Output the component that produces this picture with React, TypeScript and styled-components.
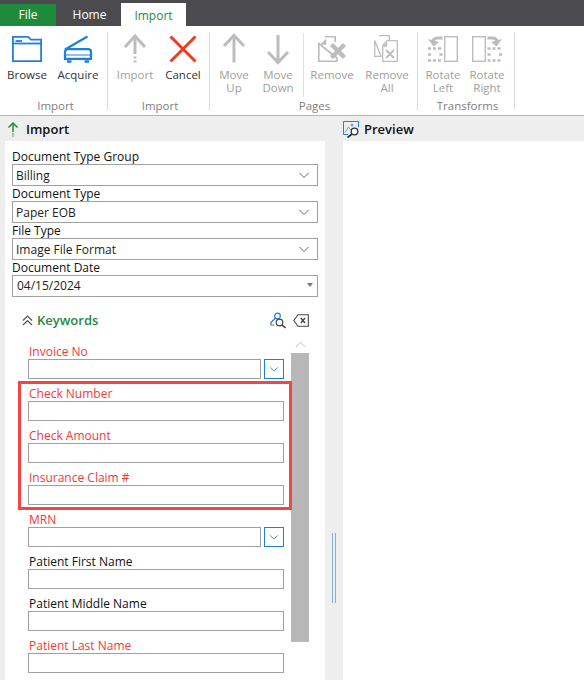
import React from "react";
import styled, { createGlobalStyle } from "styled-components";

const GlobalStyle = createGlobalStyle`
  html, body {
    margin: 0;
    padding: 0;
    background: #eeeeee;
  }
  body {
    font-family: "Open Sans", "Noto Sans", "Liberation Sans", sans-serif;
    font-size: 12px;
    color: #222;
    overflow: hidden;
  }
  * { box-sizing: border-box; }
`;

const Page = styled.div`
  width: 584px;
  height: 680px;
  display: flex;
  flex-direction: column;
  overflow: hidden;
`;

const TabBar = styled.div`
  height: 26px;
  flex: none;
  background: #4b4b4f;
  display: flex;
  align-items: flex-end;
`;

const FileTab = styled.div`
  width: 56px;
  height: 22px;
  padding-bottom: 1px;
  background: #1e8b3c;
  color: #fff;
  display: flex;
  align-items: center;
  justify-content: center;
`;

const HomeTab = styled.div`
  width: 65px;
  height: 22px;
  padding: 0 0 1px 2px;
  color: #fff;
  display: flex;
  align-items: center;
  justify-content: center;
`;

const ActiveTab = styled.div`
  width: 65px;
  height: 23px;
  padding-top: 1px;
  background: #fff;
  color: #1e8b3c;
  display: flex;
  align-items: center;
  justify-content: center;
`;

const Ribbon = styled.div`
  height: 90px;
  flex: none;
  background: #fff;
  border-bottom: 1px solid #b4b4b4;
  display: flex;
  padding-top: 6px;
`;

const RibbonGroup = styled.div<{ $width: number; $pad: number }>`
  width: ${(p) => p.$width}px;
  height: 78px;
  padding: 1px 0 0 ${(p) => p.$pad}px;
  border-right: 1px solid #dcdcdc;
  display: flex;
  flex-direction: column;
  flex: none;
`;

const GroupButtons = styled.div`
  height: 65px;
  flex: none;
  display: flex;
`;

const GroupLabel = styled.div`
  height: 16px;
  flex: none;
  line-height: 16px;
  text-align: center;
  color: #808080;
  font-size: 11.5px;
`;

const RibbonButton = styled.div<{ $width: number; $disabled?: boolean }>`
  width: ${(p) => p.$width}px;
  flex: none;
  display: flex;
  flex-direction: column;
  align-items: center;
  text-align: center;
  line-height: 13px;
  font-size: 11.5px;
  color: ${(p) => (p.$disabled ? "#a0a0a0" : "#333")};
  svg {
    display: block;
    margin-bottom: 3px;
    flex: none;
  }
`;

const InnerDivider = styled.div`
  width: 1px;
  height: 64px;
  background: #e2e2e2;
  margin: 0 0 0 3px;
  flex: none;
`;

const PaneHeaders = styled.div`
  height: 25px;
  flex: none;
  padding-top: 1px;
  display: flex;
  align-items: center;
`;

const PaneTitle = styled.div<{ $width: number; $pad: number; $gap: number }>`
  width: ${(p) => p.$width}px;
  padding-left: ${(p) => p.$pad}px;
  display: flex;
  align-items: center;
  gap: ${(p) => p.$gap}px;
  font-size: 13px;
  font-weight: 600;
  color: #111;
`;

const Workspace = styled.div`
  flex: 1;
  min-height: 0;
  display: flex;
  padding-left: 5px;
`;

const LeftPanel = styled.div`
  width: 320px;
  background: #fff;
  padding-top: 8px;
  flex: none;
`;

const Splitter = styled.div`
  width: 18px;
  flex: none;
  display: flex;
  align-items: flex-start;
  justify-content: center;
  padding-top: 392px;
`;

const SplitterGrip = styled.div`
  width: 4px;
  height: 70px;
  border-left: 1px solid #7fb2e5;
  border-right: 1px solid #7fb2e5;
`;

const RightPanel = styled.div`
  flex: 1;
  background: #fff;
`;

const MainFields = styled.div`
  padding: 0 7px;
`;

const FieldLabel = styled.div<{ $required?: boolean; $inset?: boolean }>`
  height: 15px;
  line-height: 15px;
  padding-left: ${(p) => (p.$inset ? 1 : 0)}px;
  color: ${(p) => (p.$required ? "#f03a3a" : "#111")};
  white-space: nowrap;
`;

const SelectBox = styled.div<{ $date?: boolean }>`
  height: 22px;
  border: 1px solid #a0a0a0;
  background: #fff;
  display: flex;
  align-items: center;
  justify-content: space-between;
  padding: ${(p) => (p.$date ? "0 4px 2px 4px" : "0 7px 0 3px")};
  color: #222;
`;

const KeywordsHeader = styled.div`
  height: 41px;
  padding: 5px 16px 0 17px;
  display: flex;
  align-items: center;
  font-size: 13px;
  font-weight: 600;
  color: #1e8b3c;
`;

const KeywordsTitle = styled.div`
  display: flex;
  align-items: center;
  gap: 4px;
  flex: 1;
`;

const HeaderIcons = styled.div`
  display: flex;
  align-items: center;
  gap: 7px;
`;

const KeywordsBody = styled.div`
  display: flex;
  padding: 0 16px 0 23px;
`;

const FieldList = styled.div`
  width: 256px;
  flex: none;
  padding-top: 6px;
  display: flex;
  flex-direction: column;
`;

const FieldBlock = styled.div`
  margin-bottom: 7px;
`;

const FieldRow = styled.div`
  display: flex;
  gap: 3px;
`;

const TextBox = styled.div`
  flex: 1;
  height: 20px;
  border: 1px solid #a0a0a0;
  background: #fff;
`;

const LookupButton = styled.div`
  width: 20px;
  height: 20px;
  flex: none;
  border: 1px solid #1e7fd8;
  display: flex;
  align-items: center;
  justify-content: center;
`;

const HighlightGroup = styled.div`
  position: relative;
  &::after {
    content: "";
    position: absolute;
    left: -10px;
    right: -8px;
    top: -5px;
    bottom: 2px;
    border: 3px solid #f44545;
    pointer-events: none;
  }
`;

const ScrollTrack = styled.div`
  width: 18px;
  margin-left: 7px;
  flex: none;
  display: flex;
  flex-direction: column;
  align-items: center;
`;

const ScrollArrow = styled.div`
  height: 15px;
  padding-bottom: 2px;
  display: flex;
  align-items: center;
  justify-content: center;
`;

const ScrollThumb = styled.div`
  width: 18px;
  height: 289px;
  background: #b8b8ba;
`;

const GRAY = "#bdbdbd";
const BLUE = "#1e80dc";

const Chevron = ({ color = "#666", size = 12 }: { color?: string; size?: number }) => (
  <svg width={size} height={size} viewBox="0 0 12 12" fill="none" stroke={color} strokeWidth="1">
    <path d="M1.5 4 L6 8.5 L10.5 4" />
  </svg>
);

const ChevronUp = () => (
  <svg width="11" height="7" viewBox="0 0 11 7" fill="none" stroke="#c4c4c4" strokeWidth="1">
    <path d="M0.8 6 L5.5 1 L10.2 6" />
  </svg>
);

const BrowseIcon = () => (
  <svg width="32" height="32" viewBox="0 0 32 32" fill="none" stroke={BLUE} strokeWidth="1.8">
    <path d="M1.9 3.9 H17 L20 6.6 H30.1 V28.1 H1.9 Z" />
    <path d="M2 10.5 H30" />
    <path d="M4.5 8 H11" />
  </svg>
);

const AcquireIcon = () => (
  <svg width="32" height="32" viewBox="0 0 32 32" fill="none" stroke={BLUE} strokeWidth="2.2">
    <path d="M3 16.5 L25.5 3.5" />
    <path d="M6 16.1 H26 Q29 16.1 29 19 V25.9 H3 V19 Q3 16.1 6 16.1 Z" />
    <path d="M3.5 22 H28.5" strokeWidth="1" />
    <path d="M5 28.5 H9.5 M22.5 28.5 H27" strokeWidth="2.4" />
  </svg>
);

const ImportIcon = () => (
  <svg width="32" height="32" viewBox="0 0 32 32" fill="none" stroke={GRAY} strokeWidth="3">
    <path d="M6 14 L16 3 L26 14" />
    <path d="M16 4 V21" />
    <path d="M16 23.5 V25.5 M16 27.5 V29.5" />
  </svg>
);

const CancelIcon = () => (
  <svg width="32" height="32" viewBox="0 0 32 32" fill="none" stroke="#ee3b24" strokeWidth="3">
    <path d="M3.5 3.5 L28.5 28.5 M28.5 3.5 L3.5 28.5" />
  </svg>
);

const ArrowUpIcon = () => (
  <svg width="32" height="32" viewBox="0 0 32 32" fill="none" stroke={GRAY} strokeWidth="3">
    <path d="M6 13 L16 2.5 L26 13" />
    <path d="M16 3 V29.5" />
  </svg>
);

const ArrowDownIcon = () => (
  <svg width="32" height="32" viewBox="0 0 32 32" fill="none" stroke={GRAY} strokeWidth="3">
    <path d="M6 19 L16 29.5 L26 19" />
    <path d="M16 2 V29" />
  </svg>
);

const RemoveIcon = () => (
  <svg width="32" height="32" viewBox="0 0 32 32" fill="none" stroke={GRAY} strokeWidth="1.6">
    <path d="M9 3.8 H19.2 V9 M21 25 V28.2 H2.8 V10.5 Z" />
    <path d="M9.5 11 V7.5 L6 11 Z" fill={GRAY} />
    <path d="M15.5 11.5 L28.5 24.5 M28.5 11.5 L15.5 24.5" strokeWidth="4.4" />
  </svg>
);

const RemoveAllIcon = () => (
  <svg width="32" height="32" viewBox="0 0 32 32" fill="none" stroke={GRAY} strokeWidth="1.3">
    <path d="M8 2.7 H18.3 V7 M10 23.3 H3.7 V7.5 Z" />
    <path d="M16 7.7 H26.3 V28.3 H11.7 V12.5 Z" fill="#fff" />
    <path d="M15.5 13 V10.5 L13 13 Z" fill={GRAY} />
    <path d="M15 17 L23 25 M23 17 L15 25" strokeWidth="1.8" />
  </svg>
);

const RotateLeftIcon = () => (
  <svg width="32" height="32" viewBox="0 0 32 32" fill="none" stroke={GRAY} strokeWidth="1.4">
    <rect x="17.7" y="3.7" width="12.6" height="24.6" />
    <path d="M15.5 5 H10 Q6 5.5 5.5 9.5" strokeWidth="3" />
    <path d="M1 6 L6.5 13.5 L12 9 Z" fill={GRAY} stroke="none" />
    <path d="M1 15.5 H15.5 M1 27.5 H15.5" strokeWidth="2.6" strokeDasharray="3 2" />
    <path d="M1 21.5 H4 M12.5 21.5 H15.5" strokeWidth="2.6" />
  </svg>
);

const RotateRightIcon = () => (
  <svg width="32" height="32" viewBox="0 0 32 32" fill="none" stroke={GRAY} strokeWidth="1.4">
    <rect x="1.7" y="3.7" width="12.6" height="24.6" />
    <path d="M16.5 5 H22 Q26 5.5 26.5 9.5" strokeWidth="3" />
    <path d="M31 6 L25.5 13.5 L20 9 Z" fill={GRAY} stroke="none" />
    <path d="M16.5 15.5 H31 M16.5 27.5 H31" strokeWidth="2.6" strokeDasharray="3 2" />
    <path d="M16.5 21.5 H19.5 M28 21.5 H31" strokeWidth="2.6" />
  </svg>
);

const ImportTitleIcon = () => (
  <svg width="14" height="16" viewBox="0 0 14 16" fill="none" stroke="#1e8b3c" strokeWidth="1.5">
    <path d="M2.5 6.5 L7 2 L11.5 6.5" />
    <path d="M7 2 V11" />
    <path d="M7 12.5 V13.5 M7 14.5 V15.5" />
  </svg>
);

const PreviewIcon = () => (
  <svg width="16" height="17" viewBox="0 0 16 17" fill="none">
    <path d="M0.5 13.5 V0.5 H15.5 V6" stroke={BLUE} />
    <path d="M0.5 13.5 H5" stroke={BLUE} />
    <path d="M2 11.5 L5.5 6 L8 9" stroke="#6aa9e6" />
    <circle cx="9" cy="4" r="1.5" fill="#6aa9e6" />
    <circle cx="11.5" cy="10.5" r="3.3" stroke="#333" strokeWidth="1.3" fill="#fff" />
    <path d="M9 13 L4.5 16.5" stroke="#333" strokeWidth="1.8" />
  </svg>
);

const KeyLookupIcon = () => (
  <svg width="16" height="17" viewBox="0 0 16 17" fill="none">
    <circle cx="7.5" cy="4" r="2.8" stroke={BLUE} strokeWidth="1.2" />
    <path d="M5.5 6 L1 10.5 V13 H4" stroke={BLUE} strokeWidth="1.2" />
    <circle cx="9.5" cy="10.5" r="3.3" stroke="#444" strokeWidth="1.2" fill="#fff" />
    <path d="M12 13 L15.5 16" stroke="#444" strokeWidth="1.6" />
  </svg>
);

const ClearIcon = () => (
  <svg width="16" height="13" viewBox="0 0 16 13" fill="none" stroke="#444" strokeWidth="1.1">
    <path d="M5 0.7 H15.3 V12.3 H5 L0.8 6.5 Z" />
    <path d="M7.8 4 L12 9 M12 4 L7.8 9" strokeWidth="1.4" />
  </svg>
);

const DoubleChevronUp = () => (
  <svg width="11" height="11" viewBox="0 0 11 11" fill="none" stroke="#555" strokeWidth="1.2">
    <path d="M1 5.5 L5.5 1 L10 5.5" />
    <path d="M1 10 L5.5 5.5 L10 10" />
  </svg>
);

const DateCaret = () => (
  <svg width="6" height="4" viewBox="0 0 6 4">
    <path d="M0 0 H6 L3 4 Z" fill="#777" />
  </svg>
);

const Field = ({ label, required, lookup }: { label: string; required?: boolean; lookup?: boolean }) => (
  <FieldBlock>
    <FieldLabel $required={required} $inset>{label}</FieldLabel>
    <FieldRow>
      <TextBox />
      {lookup && (
        <LookupButton>
          <Chevron color="#1e7fd8" size={10} />
        </LookupButton>
      )}
    </FieldRow>
  </FieldBlock>
);

const SelectField = ({ label, value, date }: { label: string; value: string; date?: boolean }) => (
  <div>
    <FieldLabel>{label}</FieldLabel>
    <SelectBox $date={date}>
      {value}
      {date ? <DateCaret /> : <Chevron />}
    </SelectBox>
  </div>
);

export default function App() {
  return (
    <>
      <GlobalStyle />
      <Page>
        <TabBar>
          <FileTab>File</FileTab>
          <HomeTab>Home</HomeTab>
          <ActiveTab>Import</ActiveTab>
        </TabBar>
        <Ribbon>
          <RibbonGroup $width={108} $pad={4}>
            <GroupButtons>
              <RibbonButton $width={46}><BrowseIcon />Browse</RibbonButton>
              <RibbonButton $width={56}><AcquireIcon />Acquire</RibbonButton>
            </GroupButtons>
            <GroupLabel>Import</GroupLabel>
          </RibbonGroup>
          <RibbonGroup $width={102} $pad={3}>
            <GroupButtons>
              <RibbonButton $width={48} $disabled><ImportIcon />Import</RibbonButton>
              <RibbonButton $width={48}><CancelIcon />Cancel</RibbonButton>
            </GroupButtons>
            <GroupLabel>Import</GroupLabel>
          </RibbonGroup>
          <RibbonGroup $width={208} $pad={2}>
            <GroupButtons>
              <RibbonButton $width={44} $disabled><ArrowUpIcon />Move<br />Up</RibbonButton>
              <RibbonButton $width={44} $disabled><ArrowDownIcon />Move<br />Down</RibbonButton>
              <InnerDivider />
              <RibbonButton $width={56} $disabled><RemoveIcon />Remove</RibbonButton>
              <RibbonButton $width={54} $disabled><RemoveAllIcon />Remove<br />All</RibbonButton>
            </GroupButtons>
            <GroupLabel>Pages</GroupLabel>
          </RibbonGroup>
          <RibbonGroup $width={97} $pad={3}>
            <GroupButtons>
              <RibbonButton $width={44} $disabled><RotateLeftIcon />Rotate<br />Left</RibbonButton>
              <RibbonButton $width={44} $disabled><RotateRightIcon />Rotate<br />Right</RibbonButton>
            </GroupButtons>
            <GroupLabel>Transforms</GroupLabel>
          </RibbonGroup>
        </Ribbon>
        <PaneHeaders>
          <PaneTitle $width={343} $pad={6} $gap={6}><ImportTitleIcon />Import</PaneTitle>
          <PaneTitle $width={241} $pad={0} $gap={5}><PreviewIcon />Preview</PaneTitle>
        </PaneHeaders>
        <Workspace>
          <LeftPanel>
            <MainFields>
              <SelectField label="Document Type Group" value="Billing" />
              <SelectField label="Document Type" value="Paper EOB" />
              <SelectField label="File Type" value="Image File Format" />
              <SelectField label="Document Date" value="04/15/2024" date />
            </MainFields>
            <KeywordsHeader>
              <KeywordsTitle><DoubleChevronUp />Keywords</KeywordsTitle>
              <HeaderIcons><KeyLookupIcon /><ClearIcon /></HeaderIcons>
            </KeywordsHeader>
            <KeywordsBody>
              <FieldList>
                <Field label="Invoice No" required lookup />
                <HighlightGroup>
                  <Field label="Check Number" required />
                  <Field label="Check Amount" required />
                  <Field label="Insurance Claim #" required />
                </HighlightGroup>
                <Field label="MRN" required lookup />
                <Field label="Patient First Name" />
                <Field label="Patient Middle Name" />
                <Field label="Patient Last Name" required />
              </FieldList>
              <ScrollTrack>
                <ScrollArrow><ChevronUp /></ScrollArrow>
                <ScrollThumb />
              </ScrollTrack>
            </KeywordsBody>
          </LeftPanel>
          <Splitter><SplitterGrip /></Splitter>
          <RightPanel />
        </Workspace>
      </Page>
    </>
  );
}
